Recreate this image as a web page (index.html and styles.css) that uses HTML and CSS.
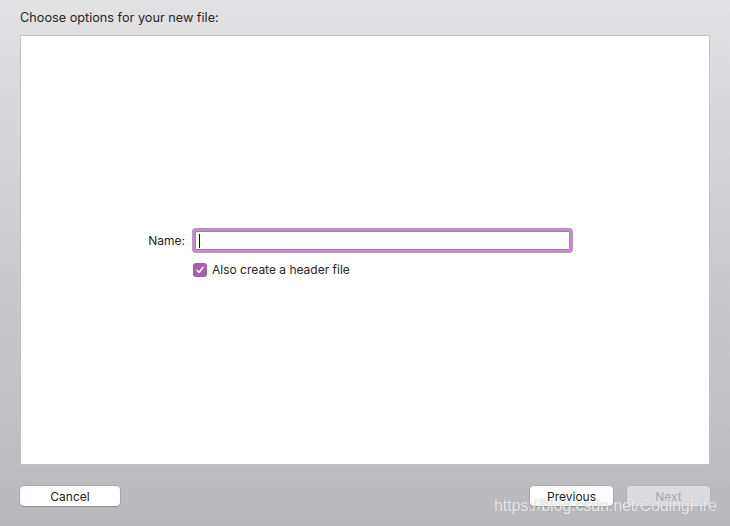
FILE: index.html
```html
<!DOCTYPE html>
<html>
<head>
<meta charset="utf-8">
<link rel="stylesheet" href="styles.css">
</head>
<body>
<div class="window">
  <div class="header">Choose options for your new file:</div>
  <div class="panel">
    <div class="form">
      <label class="label">Name:</label>
      <div class="field"><span class="caret"></span></div>
      <div></div>
      <div class="check-row">
        <span class="checkbox">
          <svg width="10" height="10" viewBox="0 0 10 10"><path d="M2 5.3 L4.1 7.5 L8 2.3" fill="none" stroke="#fff" stroke-width="1.6" stroke-linecap="round" stroke-linejoin="round"/></svg>
        </span>
        <span class="check-label">Also create a header file</span>
      </div>
    </div>
  </div>
  <div class="footer">
    <button class="btn">Cancel</button>
    <div class="right">
      <button class="btn btn-nav">Previous</button>
      <button class="btn btn-nav disabled">Next</button>
    </div>
  </div>
  <div class="watermark">https://blog.csdn.net/CodingFire</div>
</div>
</body>
</html>
```
FILE: styles.css
```css
html, body {
  margin: 0;
  padding: 0;
}
body {
  width: 730px;
  height: 526px;
  overflow: hidden;
  font-family: "Inter", "Liberation Sans", sans-serif;
  font-size: 12px;
  color: #222;
}
.window {
  position: relative;
  width: 730px;
  height: 526px;
  background: linear-gradient(to bottom, #e2e2e5 0%, #cfcfd3 40%, #b9b9bd 100%);
  display: flex;
  flex-direction: column;
}
.header {
  height: 35px;
  box-sizing: border-box;
  padding: 10px 0 0 20px;
  font-size: 12.7px;
  color: #262626;
}
.panel {
  margin: 0 20px 0 20px;
  height: 430px;
  box-sizing: border-box;
  background: #fff;
  border: 1px solid #c3c3c7;
  padding-top: 192px;
}
.form {
  display: grid;
  grid-template-columns: 164px 381px;
  column-gap: 7px;
  row-gap: 9px;
}
.label {
  text-align: right;
  align-self: center;
  font-size: 12px;
  color: #262626;
}
.field {
  height: 25px;
  box-sizing: border-box;
  border: 3px solid #c08fc8;
  border-radius: 4px;
  box-shadow: inset 0 0 0 1px #a777b0;
  background: #fff;
  display: flex;
  align-items: center;
  padding-left: 4px;
}
.caret {
  width: 1px;
  height: 14px;
  background: #111;
}
.check-row {
  display: flex;
  align-items: center;
  gap: 5px;
  padding-left: 1px;
}
.checkbox {
  width: 14px;
  height: 14px;
  border-radius: 3px;
  background: #a45fae;
  display: flex;
  align-items: center;
  justify-content: center;
}
.check-label {
  font-size: 12px;
  color: #262626;
}
.footer {
  display: flex;
  justify-content: space-between;
  padding: 21px 20px 0 20px;
}
.right {
  display: flex;
  gap: 14px;
}
.btn {
  height: 20px;
  width: 100px;
  padding: 0;
  font-family: "Inter", "Liberation Sans", sans-serif;
  font-size: 12px;
  color: #222;
  background: #fff;
  border: none;
  border-radius: 4px;
  box-shadow: 0 0 0 0.5px rgba(0,0,0,0.2), 0 1px 1px rgba(0,0,0,0.15);
}
.btn-nav {
  width: 83px;
}
.disabled {
  background: #dcdcdf;
  color: #a8a8ac;
  box-shadow: 0 0 0 0.5px rgba(0,0,0,0.08);
}
.watermark {
  position: absolute;
  left: 494px;
  top: 497px;
  font-family: "Liberation Sans", sans-serif;
  font-size: 16px;
  color: rgba(255,255,255,0.8);
  text-shadow: 0 0 1px rgba(120,120,120,0.6);
  letter-spacing: -0.1px;
}
```
